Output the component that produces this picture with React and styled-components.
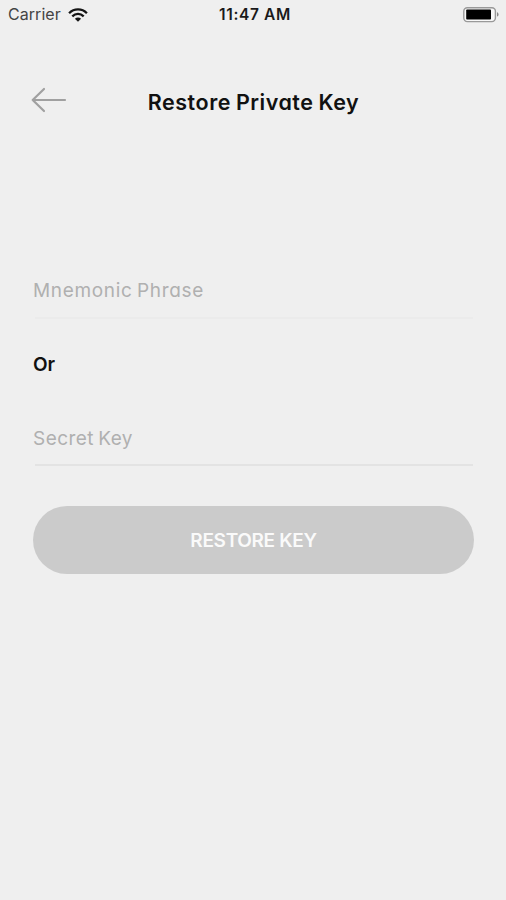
import React from "react";
import styled, { createGlobalStyle } from "styled-components";

const GlobalStyle = createGlobalStyle`
  *, *::before, *::after { box-sizing: border-box; }
  body { margin: 0; background: #efefef; }
`;

const Screen = styled.main`
  display: flex;
  flex-direction: column;
  width: 506px;
  height: 900px;
  overflow: hidden;
  background: #efefef;
  color: #111;
  font-family: Inter, "Liberation Sans", sans-serif;
`;

const StatusBar = styled.div`
  display: grid;
  grid-template-columns: 1fr auto 1fr;
  align-items: center;
  height: 29px;
  padding: 0 6px 0 8px;
`;

const Network = styled.div`
  display: flex;
  align-items: center;
  gap: 7px;
`;

const Carrier = styled.span`
  padding-bottom: 1px;
  font-size: 16px;
  line-height: 20px;
  letter-spacing: 0.05px;
  color: #444;
`;

const Clock = styled.time`
  padding-left: 2px;
  font-size: 15.5px;
  line-height: 20px;
  font-weight: 600;
  letter-spacing: 0.65px;
  color: #1a1a1a;
`;

const Battery = styled.svg`
  justify-self: end;
`;

const Header = styled.header`
  display: grid;
  grid-template-columns: 36px 1fr 36px;
  align-items: center;
  height: 50px;
  margin: 49px 31px 0;
`;

const BackButton = styled.button`
  display: flex;
  padding: 0 0 6px;
  border: 0;
  background: none;
`;

const Title = styled.h1`
  margin: 0;
  padding: 0 0 2px 1px;
  text-align: center;
  font-size: 21.5px;
  line-height: 30px;
  font-weight: 600;
  font-feature-settings: "cv11";
  letter-spacing: ${(p) => p.$tracking};
  word-spacing: -1px;
  white-space: nowrap;
`;

const Form = styled.form`
  display: flex;
  flex-direction: column;
  margin: 135px 32px 0 33px;
`;

const Field = styled.input`
  width: 100%;
  height: 56px;
  padding: 0 0 2px;
  border: 0;
  border-radius: 0;
  outline: 0;
  background: linear-gradient(${(p) => p.$line}, ${(p) => p.$line}) 2px ${(p) => p.$lineTop} / 438px 2px no-repeat;
  font: 400 19px/28px Inter, "Liberation Sans", sans-serif;
  font-feature-settings: "cv11";
  letter-spacing: ${(p) => p.$tracking};
  word-spacing: -1.5px;

  &::placeholder { color: #b0b0b0; opacity: 1; }
`;

const Divider = styled.p`
  margin: 31px 0;
  font-size: 19px;
  line-height: 30px;
  font-weight: 600;
  letter-spacing: 0;
`;

const SubmitButton = styled.button`
  height: 68px;
  margin-top: 39px;
  padding: 2px 0 0;
  border: 0;
  border-radius: 34px;
  background: #cbcbcb;
  color: #fafafa;
  font: 600 19px/28px Inter, "Liberation Sans", sans-serif;
  letter-spacing: ${(p) => p.$tracking};
`;

const WifiIcon = () => (
  <svg width="20" height="14" viewBox="0 0 20 14" aria-label="Wi-Fi">
    <g fill="none" stroke="#151515" strokeWidth="2.3">
      <path d="M1.1 5.2C6.1.1 13.9.1 18.9 5.2" />
      <path d="M4.3 8.3c3.3-3.2 8.1-3.2 11.4 0" />
    </g>
    <path d="M6.9 10.7c1.8-1.7 4.4-1.7 6.2 0L10 13.7Z" fill="#151515" />
  </svg>
);

const BatteryIcon = () => (
  <Battery width="38" height="16" viewBox="0 0 38 16" aria-label="Battery full">
    <rect x="1.8" y="0.8" width="31.6" height="13.8" rx="3.5" fill="#f7f7f7" stroke="#999" strokeWidth="1.4" />
    <rect x="4.2" y="2.5" width="24.8" height="10" rx="0.8" fill="#000" />
    <path d="M35 5.2c2.1.7 2.1 3.7 0 4.4Z" fill="#888" />
  </Battery>
);

const ArrowIcon = () => (
  <svg width="36" height="26" viewBox="0 0 36 26" aria-hidden="true">
    <path d="M34 13H1.7M13 2 1.7 13 13 24" fill="none" stroke="#a0a0a0" strokeWidth="2.2" strokeLinecap="round" strokeLinejoin="round" />
  </svg>
);

export default function App() {
  return (
    <Screen>
      <GlobalStyle />
      <StatusBar>
        <Network>
          <Carrier>Carrier</Carrier>
          <WifiIcon />
        </Network>
        <Clock>11:47 AM</Clock>
        <BatteryIcon />
      </StatusBar>
      <Header>
        <BackButton type="button" aria-label="Back">
          <ArrowIcon />
        </BackButton>
        <Title $tracking="0.52px">Restore Private Key</Title>
      </Header>
      <Form>
        <Field placeholder="Mnemonic Phrase" $line="#ebebeb" $lineTop="100%" $tracking="0.67px" />
        <Divider>Or</Divider>
        <Field placeholder="Secret Key" $line="#e3e3e3" $lineTop="53px" $tracking="0.45px" />
        <SubmitButton type="button" $tracking="-0.33px">RESTORE KEY</SubmitButton>
      </Form>
    </Screen>
  );
}
